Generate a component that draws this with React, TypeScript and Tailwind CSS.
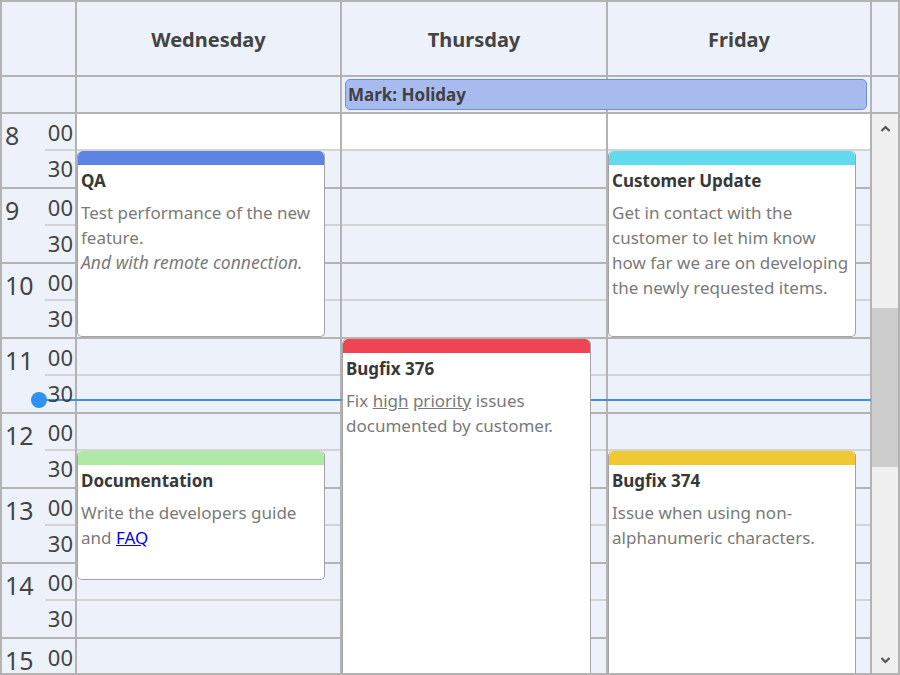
import React from "react";

const hours = [8, 9, 10, 11, 12, 13, 14, 15];

type Ev = {
  title: string;
  bar: string;
  pos: string;
  body: React.ReactNode;
};

const days: { name: string; width: string; events: Ev[] }[] = [
  {
    name: "Wednesday",
    width: "w-[265px]",
    events: [
      {
        title: "QA",
        bar: "bg-[#5b84e5]",
        pos: "top-[37px] h-[186px] w-[248px]",
        body: (
          <>
            Test performance of the new feature.
            <br />
            <i className="text-[17.5px]">And with remote connection.</i>
          </>
        ),
      },
      {
        title: "Documentation",
        bar: "bg-[#aeeaa5]",
        pos: "top-[337px] h-[129px] w-[248px]",
        body: (
          <>
            Write the developers guide and{" "}
            <a href="#" className="text-[#0000ee] underline">
              FAQ
            </a>
          </>
        ),
      },
    ],
  },
  {
    name: "Thursday",
    width: "w-[266px]",
    events: [
      {
        title: "Bugfix 376",
        bar: "bg-[#ef4453]",
        pos: "top-[225px] h-[400px] w-[249px]",
        body: (
          <>
            Fix <span className="underline">high</span>{" "}
            <span className="underline">priority</span> issues documented by
            customer.
          </>
        ),
      },
    ],
  },
  {
    name: "Friday",
    width: "w-[264px]",
    events: [
      {
        title: "Customer Update",
        bar: "bg-[#63dbef]",
        pos: "top-[37px] h-[186px] w-[248px]",
        body: (
          <>
            Get in contact with the customer to let him know how far we are on
            developing the newly requested items.
          </>
        ),
      },
      {
        title: "Bugfix 374",
        bar: "bg-[#f0c832]",
        pos: "top-[337px] h-[400px] w-[248px]",
        body: <>Issue when using non-alphanumeric characters.</>,
      },
    ],
  },
];

function EventCard({ ev }: { ev: Ev }) {
  return (
    <div
      className={`absolute left-0 z-20 overflow-hidden rounded-[5px] border border-t-0 border-[#a3a3a3] bg-white ${ev.pos}`}
    >
      <div className={`h-[14px] rounded-t-[5px] ${ev.bar}`} />
      <div className="px-[3px]">
        <div className="mt-[3px] text-[17px] font-bold leading-[26px] text-[#383838]">
          {ev.title}
        </div>
        <div className="mt-[6px] text-[17px] leading-[25px] text-[#7a7a7a]">
          {ev.body}
        </div>
      </div>
    </div>
  );
}

function Chevron({ up }: { up?: boolean }) {
  return (
    <svg width="11" height="7" viewBox="0 0 11 7">
      <polyline
        points={up ? "1.5,6 5.5,2 9.5,6" : "1.5,1 5.5,5 9.5,1"}
        fill="none"
        stroke="#555"
        strokeWidth="2.2"
      />
    </svg>
  );
}

export default function App() {
  return (
    <div className="h-[675px] w-[900px] overflow-hidden border-2 border-[#b3b3b3] bg-white font-['Noto_Sans',sans-serif] text-[#444]">
      {/* header */}
      <div className="flex h-[75px] bg-[#edf2fa]">
        <div className="w-[75px] border-r-2 border-b-2 border-[#b3b3b3]" />
        {days.map((d) => (
          <div
            key={d.name}
            className={`${d.width} flex items-center justify-center border-r-2 border-b-2 border-[#b3b3b3] pt-[2px] text-[20px] font-bold text-[#444]`}
          >
            {d.name}
          </div>
        ))}
        <div className="w-[26px] border-b-2 border-[#b3b3b3]" />
      </div>

      {/* all-day row */}
      <div className="relative flex h-[37px] bg-[#edf2fa]">
        <div className="w-[75px] border-r-2 border-b-2 border-[#b3b3b3]" />
        {days.map((d) => (
          <div
            key={d.name}
            className={`${d.width} border-r-2 border-b-2 border-[#b3b3b3]`}
          />
        ))}
        <div className="w-[26px] border-b-2 border-[#b3b3b3]" />
        <div className="absolute top-[2px] left-[343px] flex h-[31px] w-[522px] items-center rounded-[5px] border border-[#6f8ee0] bg-[#a8bbee] pl-[2px] text-[17px] font-bold text-[#404040]">
          Mark: Holiday
        </div>
      </div>

      {/* body */}
      <div className="relative flex h-[560px] overflow-hidden">
        {/* time gutter */}
        <div className="w-[75px] shrink-0 border-r-2 border-[#b3b3b3] bg-[#edf2fa]">
          {hours.map((h) => (
            <div key={h} className="flex h-[75px] border-b-2 border-[#b3b3b3]">
              <div className="relative z-20 w-[43px] pt-[9px] pl-[3px] text-[25px] leading-none text-[#444]">
                {h}
              </div>
              <div className="flex w-[30px] flex-col">
                <div className="relative z-20 h-[37px] border-b-2 border-[#d4d4d4] pt-[1px] pr-[2px] text-right text-[22px] leading-[34px] text-[#444]">
                  00
                </div>
                <div className="relative z-20 flex-1 pr-[2px] text-right text-[22px] leading-[34px] text-[#444]">
                  30
                </div>
              </div>
            </div>
          ))}
        </div>

        {/* day columns */}
        {days.map((d) => (
          <div
            key={d.name}
            className={`${d.width} relative shrink-0 border-r-2 border-[#b3b3b3]`}
          >
            {hours.map((h) => (
              <div
                key={h}
                className="flex h-[75px] flex-col border-b-2 border-[#b3b3b3] bg-[#edf2fa]"
              >
                <div
                  className={`h-[37px] border-b-2 border-[#d4d4d4] ${h === 8 ? "bg-white" : ""}`}
                />
                <div className="flex-1" />
              </div>
            ))}
            {d.events.map((ev) => (
              <EventCard key={ev.title} ev={ev} />
            ))}
          </div>
        ))}

        {/* scrollbar */}
        <div className="flex w-[26px] shrink-0 flex-col bg-[#f0f0f0]">
          <div className="flex h-[28px] items-center justify-center">
            <Chevron up />
          </div>
          <div className="flex-1">
            <div className="mt-[166px] h-[159px] bg-[#cdcdcd]" />
          </div>
          <div className="flex h-[28px] items-center justify-center">
            <Chevron />
          </div>
        </div>

        {/* current time */}
        <div className="absolute top-[285px] right-[27px] left-[37px] z-10 h-[1.5px] bg-[#3f90e4]" />
        <div className="absolute top-[278px] left-[29px] z-10 h-[16px] w-[16px] rounded-full bg-[#2c94f0]" />
      </div>
    </div>
  );
}
